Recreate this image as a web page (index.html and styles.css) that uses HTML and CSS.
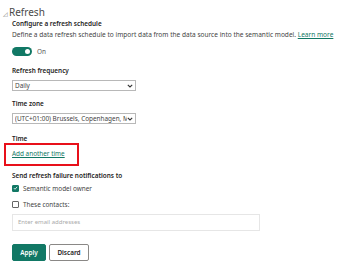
FILE: index.html
```html
<!DOCTYPE html>
<html lang="en">
<head>
    <meta charset="UTF-8">
    <title>Refresh</title>
    <link rel="stylesheet" href="styles.css">
</head>
<body>
    <div class="panel">
        <div class="section-title"><span class="caret">&#9727;</span>Refresh</div>

        <div class="content">
            <div class="heading">Configure a refresh schedule</div>
            <p class="desc">Define a data refresh schedule to import data from the data source into the semantic model. <a href="#" class="link">Learn more</a></p>

            <!-- Toggle -->
            <div class="toggle-row">
                <span class="toggle"><span class="knob"></span></span>
                <span class="toggle-label">On</span>
            </div>

            <div class="label first">Refresh frequency</div>
            <div class="select">
                <span>Daily</span>
                <svg class="chev" width="6" height="4" viewBox="0 0 6 4"><path d="M0.8 0.8 L3 3 L5.2 0.8" fill="none" stroke="#333" stroke-width="1.1"/></svg>
            </div>

            <div class="label">Time zone</div>
            <div class="select">
                <span class="tz">(UTC+01:00) Brussels, Copenhagen, M</span>
                <svg class="chev" width="6" height="4" viewBox="0 0 6 4"><path d="M0.8 0.8 L3 3 L5.2 0.8" fill="none" stroke="#333" stroke-width="1.1"/></svg>
            </div>

            <div class="label time">Time</div>
            <div class="highlight"><a href="#" class="link">Add another time</a></div>

            <div class="label notify">Send refresh failure notifications to</div>
            <div class="check-row">
                <span class="box checked">
                    <svg width="6" height="6" viewBox="0 0 6 6"><path d="M1 3.1 L2.4 4.5 L5 1.6" fill="none" stroke="#fff" stroke-width="1"/></svg>
                </span>
                <span>Semantic model owner</span>
            </div>
            <div class="check-row second">
                <span class="box"></span>
                <span>These contacts:</span>
            </div>
            <div class="email">Enter email addresses</div>

            <div class="buttons">
                <button class="btn primary">Apply</button>
                <button class="btn secondary">Discard</button>
            </div>
        </div>
    </div>
</body>
</html>
```

FILE: styles.css
```css
* {
    box-sizing: border-box;
}

body {
    margin: 0;
    padding: 0;
    background-color: #fff;
    font-family: "Noto Sans", "Open Sans", sans-serif;
    color: #252423;
    font-size: 6.4px;
}

.panel {
    padding: 5px 0 0 3px;
}

.section-title {
    font-size: 10px;
    color: #4a4a4a;
    height: 14px;
    line-height: 14px;
}

.caret {
    font-size: 6px;
    color: #777;
    margin-right: 1px;
}

.content {
    padding-left: 9px;
}

.heading {
    font-weight: 600;
    height: 9px;
    line-height: 9px;
}

.desc {
    margin: 3px 0 0 0;
    height: 8px;
    line-height: 8px;
    font-size: 6.55px;
    color: #444;
    white-space: nowrap;
}

.link {
    color: #117865;
    text-decoration: underline;
}

.toggle-row {
    display: flex;
    align-items: center;
    margin-top: 8px;
    height: 9px;
}

.toggle {
    width: 20px;
    height: 9px;
    border-radius: 5px;
    background-color: #117865;
    position: relative;
}

.toggle .knob {
    position: absolute;
    right: 2px;
    top: 2px;
    width: 5px;
    height: 5px;
    border-radius: 50%;
    background-color: #fff;
}

.toggle-label {
    margin-left: 5px;
    color: #555;
}

.label {
    font-weight: 600;
    height: 8px;
    line-height: 8px;
    margin-top: 9px;
}

.label.first {
    margin-top: 11px;
}

.label.time {
    margin-top: 11px;
}

.select {
    width: 124px;
    height: 11px;
    margin-top: 5px;
    border: 1px solid #b8b8b8;
    display: flex;
    justify-content: space-between;
    align-items: center;
    padding: 0 2px 0 2px;
    color: #444;
    white-space: nowrap;
    overflow: hidden;
}

.tz {
    overflow: hidden;
    text-overflow: clip;
    width: 112px;
}

.chev {
    flex-shrink: 0;
}

.highlight {
    margin: 0 0 0 -8px;
    width: 75px;
    height: 23px;
    border: 2px solid #e8101a;
    display: flex;
    align-items: center;
    padding: 0 0 2px 6px;
}

.label.notify {
    margin-top: 6px;
}

.check-row {
    display: flex;
    align-items: center;
    height: 8px;
    margin-top: 4px;
    color: #444;
}

.check-row.second {
    margin-top: 8px;
}

.box {
    width: 7px;
    height: 7px;
    border: 1px solid #666;
    border-radius: 1px;
    margin-right: 4px;
    display: flex;
    align-items: center;
    justify-content: center;
}

.box.checked {
    background-color: #117865;
    border-color: #117865;
}

.email {
    width: 248px;
    height: 17px;
    line-height: 15px;
    margin-top: 6px;
    border: 1px solid #e6e6e6;
    padding-left: 5px;
    color: #aaa;
    font-size: 6px;
}

.buttons {
    display: flex;
    gap: 3px;
    margin-top: 13px;
}

.btn {
    font-family: "Noto Sans", "Open Sans", sans-serif;
    font-size: 6.4px;
    font-weight: 600;
    height: 17px;
    padding: 0;
    background-color: #fff;
    border: 1px solid #8a8886;
    border-radius: 2px;
    color: #252423;
}

.btn.primary {
    background-color: #117865;
    border-color: #117865;
    color: #fff;
    width: 34px;
}

.btn.secondary {
    width: 40px;
}
```
